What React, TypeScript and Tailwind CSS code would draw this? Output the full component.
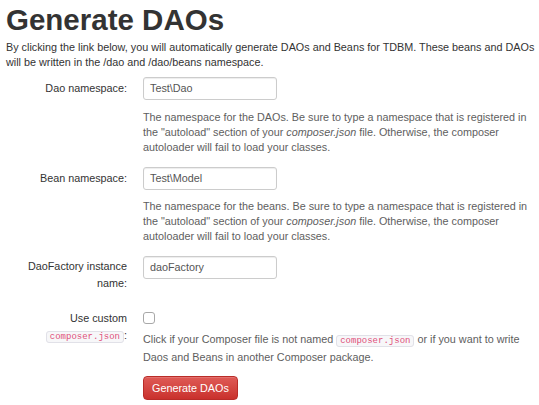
import React from "react";

const Code = ({ children }: { children: React.ReactNode }) => (
  <code className="font-['Liberation_Mono',monospace] text-[9px] text-[#e0507a] bg-[#f7f7f9] border border-[#e1e1e8] rounded-[3px] px-[3px] py-0">
    {children}
  </code>
);

const Input = ({ value }: { value: string }) => (
  <div className="w-[134px] h-[23px] border border-[#cccccc] rounded-[3px] shadow-[inset_0_1px_1px_rgba(0,0,0,0.075)] px-[6px] flex items-center text-[#555]">
    {value}
  </div>
);

export default function App() {
  return (
    <div className="w-[539px] h-[405px] overflow-hidden bg-white pl-[6px] pr-[6px] font-['Liberation_Sans',Arial,sans-serif] text-[10.8px] leading-[15px] text-[#333]">
      <h1 className="mt-[4px] text-[29.5px] leading-[32px] font-bold text-[#333]">Generate DAOs</h1>
      <p className="mt-[4px] -mr-[6px]">
        By clicking the link below, you will automatically generate DAOs and Beans for TDBM. These beans and DAOs will be
        written in the /dao and /dao/beans namespace.
      </p>

      <div className="mt-[7px] flex flex-col gap-[12px]">
        <div className="grid grid-cols-[121px_1fr] gap-x-[16px]">
          <div className="text-right pt-[4px]">Dao namespace:</div>
          <div>
            <Input value="Test\Dao" />
            <p className="mt-[10px] text-[#5e5e5e]">
              The namespace for the DAOs. Be sure to type a namespace that is registered in the "autoload" section of
              your <em>composer.json</em> file. Otherwise, the composer autoloader will fail to load your classes.
            </p>
          </div>
        </div>

        <div className="grid grid-cols-[121px_1fr] gap-x-[16px]">
          <div className="text-right pt-[4px]">Bean namespace:</div>
          <div>
            <Input value="Test\Model" />
            <p className="mt-[9px] text-[#5e5e5e]">
              The namespace for the beans. Be sure to type a namespace that is registered in the "autoload" section of
              your <em>composer.json</em> file. Otherwise, the composer autoloader will fail to load your classes.
            </p>
          </div>
        </div>

        <div className="grid grid-cols-[121px_1fr] gap-x-[16px]">
          <div className="text-right pt-[2px] leading-[17px]">DaoFactory instance name:</div>
          <div>
            <Input value="daoFactory" />
          </div>
        </div>

        <div className="grid grid-cols-[121px_1fr] gap-x-[16px] mt-[6px]">
          <div className="text-right leading-[17px]">
            Use custom <Code>composer.json</Code>:
          </div>
          <div>
            <div className="h-[12px] w-[12px] mt-[2px] border border-[#a8a8a8] rounded-[3px] bg-white" />
            <p className="mt-[8px] leading-[15.5px] text-[#5e5e5e]">
              Click if your Composer file is not named <Code>composer.json</Code> or if you want to write Daos and Beans
              in another Composer package.
            </p>
            <button className="mt-[11px] h-[24px] px-[8px] rounded-[4px] border border-[#b92c28] bg-gradient-to-b from-[#df5a56] to-[#c9302c] text-white text-[10.8px] shadow-[inset_0_1px_0_rgba(255,255,255,0.15)]">
              Generate DAOs
            </button>
          </div>
        </div>
      </div>
    </div>
  );
}
